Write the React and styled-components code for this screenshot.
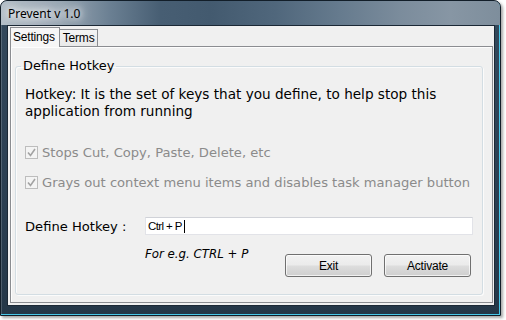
import React from "react";
import styled, { createGlobalStyle } from "styled-components";

const Global = createGlobalStyle`
  html, body { margin: 0; padding: 0; background: #ffffff; }
  #root { width: 506px; height: 320px; }
`;

const Window = styled.div`
  box-sizing: border-box;
  width: 501px;
  height: 316px;
  display: flex;
  flex-direction: column;
  border: 1px solid #121e29;
  border-radius: 7px 7px 0 0;
  background: linear-gradient(180deg, #34495c 0%, #2b3f52 60%, #243748 100%);
  box-shadow: inset -1px -1px 0 #47c7e8, inset 1px 0 0 rgba(255,255,255,0.18),
    2px 2px 3px rgba(0,0,0,0.35);
  overflow: hidden;
`;

const TitleBar = styled.div`
  height: 24px;
  display: flex;
  align-items: center;
  padding-left: 7px;
  background: linear-gradient(90deg, #b4bec7 0%, #98a6b3 12%, #6a7f92 22%, #475e73 32%, #435a6f 42%, #50677c 55%, #667b8e 68%, #7b8c9c 80%, #8796a4 90%, #7e8e9c 100%);
  font-family: "Noto Sans", "Open Sans", sans-serif;
  font-size: 12px;
  color: #000;
  text-shadow: 0 0 6px #fff, 0 0 10px #fff, 0 0 14px rgba(255,255,255,0.9);
`;

const Client = styled.div`
  flex: 1;
  margin: 0 5px 9px 6px;
  border: 1px solid #1b2835;
  background: #f0f0f0;
  padding: 1px 1px 2px 2px;
  display: flex;
  flex-direction: column;
`;

const TabStrip = styled.div`
  display: flex;
  align-items: flex-end;
  height: 20px;
  margin-bottom: -1px;
  position: relative;
  z-index: 1;
`;

const Tab = styled.div`
  box-sizing: border-box;
  height: ${(p) => (p.$active ? "20px" : "18px")};
  padding: ${(p) => (p.$active ? "0 4px 2px 2px" : "0 3px")};
  display: flex;
  align-items: center;
  border: 1px solid #8b8d91;
  border-bottom: ${(p) => (p.$active ? "none" : "1px solid #8b8d91")};
  border-left: ${(p) => (p.$active ? "1px solid #8b8d91" : "none")};
  background: ${(p) => (p.$active ? "#f6f6f6" : "linear-gradient(180deg,#f4f4f4,#e9e9e9)")};
  font-family: "Liberation Sans", Arial, sans-serif;
  font-size: 12px;
  letter-spacing: -0.2px;
  color: #000;
`;

const Panel = styled.div`
  flex: 1;
  border: 1px solid #8b8d91;
  background: #f0f0f0;
  padding: 11px 9px 7px 4px;
  display: flex;
  box-shadow: inset 1px 1px 0 #fdfdfd;
`;

const Group = styled.fieldset`
  margin: 0;
  flex: 1;
  border: 1px solid #d3dde3;
  border-radius: 3px;
  padding: 0 9px;
  box-shadow: inset 1px 1px 0 #fbfbfb, 1px 1px 0 #fbfbfb;
  font-family: "DejaVu Sans", Verdana, sans-serif;
  font-size: 13px;
  color: #000;
`;

const Legend = styled.legend`
  padding: 0 2px;
  margin-left: -4px;
  line-height: 16px;
  font-size: 12.9px;
`;

const Description = styled.p`
  margin: 12px 0 0 0;
  line-height: 17px;
  font-size: 13.6px;
  white-space: nowrap;
`;

const CheckRow = styled.div`
  display: flex;
  align-items: center;
  gap: 4px;
  height: 17px;
  margin-top: ${(p) => p.$mt}px;
  color: #8b8b8b;
  font-size: 13.1px;
  white-space: nowrap;
`;

const Box = styled.span`
  box-sizing: border-box;
  width: 13px;
  height: 13px;
  border: 1px solid #bdbdbd;
  background: #f4f4f4;
  display: inline-flex;
  align-items: center;
  justify-content: center;
`;

const HotkeyGrid = styled.div`
  display: grid;
  grid-template-columns: 120px 1fr;
  margin-top: 26px;
`;

const Label = styled.div`
  display: flex;
  align-items: center;
  font-size: 13.1px;
  height: 18px;
  white-space: nowrap;
`;

const Input = styled.div`
  box-sizing: border-box;
  height: 18px;
  background: #fff;
  border: 1px solid #e2e3e8;
  border-top-color: #d0d2d8;
  display: flex;
  align-items: center;
  padding-left: 2px;
  font-family: "Liberation Sans", Arial, sans-serif;
  font-size: 11.5px;
  letter-spacing: -0.6px;
  color: #000;
`;

const Caret = styled.span`
  display: inline-block;
  width: 1px;
  height: 13px;
  background: #000;
  margin-left: 2px;
`;

const Actions = styled.div`
  display: flex;
  align-items: flex-start;
  padding-right: 2px;
`;

const Hint = styled.div`
  margin-top: 12px;
  font-style: italic;
  font-size: 11.8px;
  flex: 1;
`;

const Button = styled.button`
  box-sizing: border-box;
  width: 87px;
  height: 23px;
  margin-top: 19px;
  margin-left: ${(p) => p.$ml || 0}px;
  border: 1px solid #707070;
  border-radius: 3px;
  background: linear-gradient(180deg, #f2f2f2 0%, #ebebeb 48%, #dddddd 52%, #cfcfcf 100%);
  box-shadow: inset 0 0 0 1px rgba(255,255,255,0.7);
  font-family: "Liberation Sans", Arial, sans-serif;
  font-size: 12px;
  letter-spacing: -0.2px;
  color: #000;
  padding: 0;
`;

const Check = () => (
  <Box>
    <svg width="9" height="9" viewBox="0 0 9 9">
      <path d="M1 4.5 L3.5 7.5 L8 1" fill="none" stroke="#a3a3a3" strokeWidth="1.6" />
    </svg>
  </Box>
);

export default function App() {
  return (
    <>
      <Global />
      <Window>
        <TitleBar>Prevent v 1.0</TitleBar>
        <Client>
          <TabStrip>
            <Tab $active>Settings</Tab>
            <Tab>Terms</Tab>
          </TabStrip>
          <Panel>
            <Group>
              <Legend>Define Hotkey</Legend>
              <Description>
                Hotkey: It is the set of keys that you define, to help stop this
                <br />
                application from running
              </Description>
              <CheckRow $mt={24}>
                <Check />
                <span>Stops Cut, Copy, Paste, Delete, etc</span>
              </CheckRow>
              <CheckRow $mt={13}>
                <Check />
                <span>Grays out context menu items and disables task manager button</span>
              </CheckRow>
              <HotkeyGrid>
                <Label>Define Hotkey :</Label>
                <Input>
                  Ctrl + P<Caret />
                </Input>
                <span />
                <Actions>
                  <Hint>For e.g. CTRL + P</Hint>
                  <Button>Exit</Button>
                  <Button $ml={12}>Activate</Button>
                </Actions>
              </HotkeyGrid>
            </Group>
          </Panel>
        </Client>
      </Window>
    </>
  );
}
